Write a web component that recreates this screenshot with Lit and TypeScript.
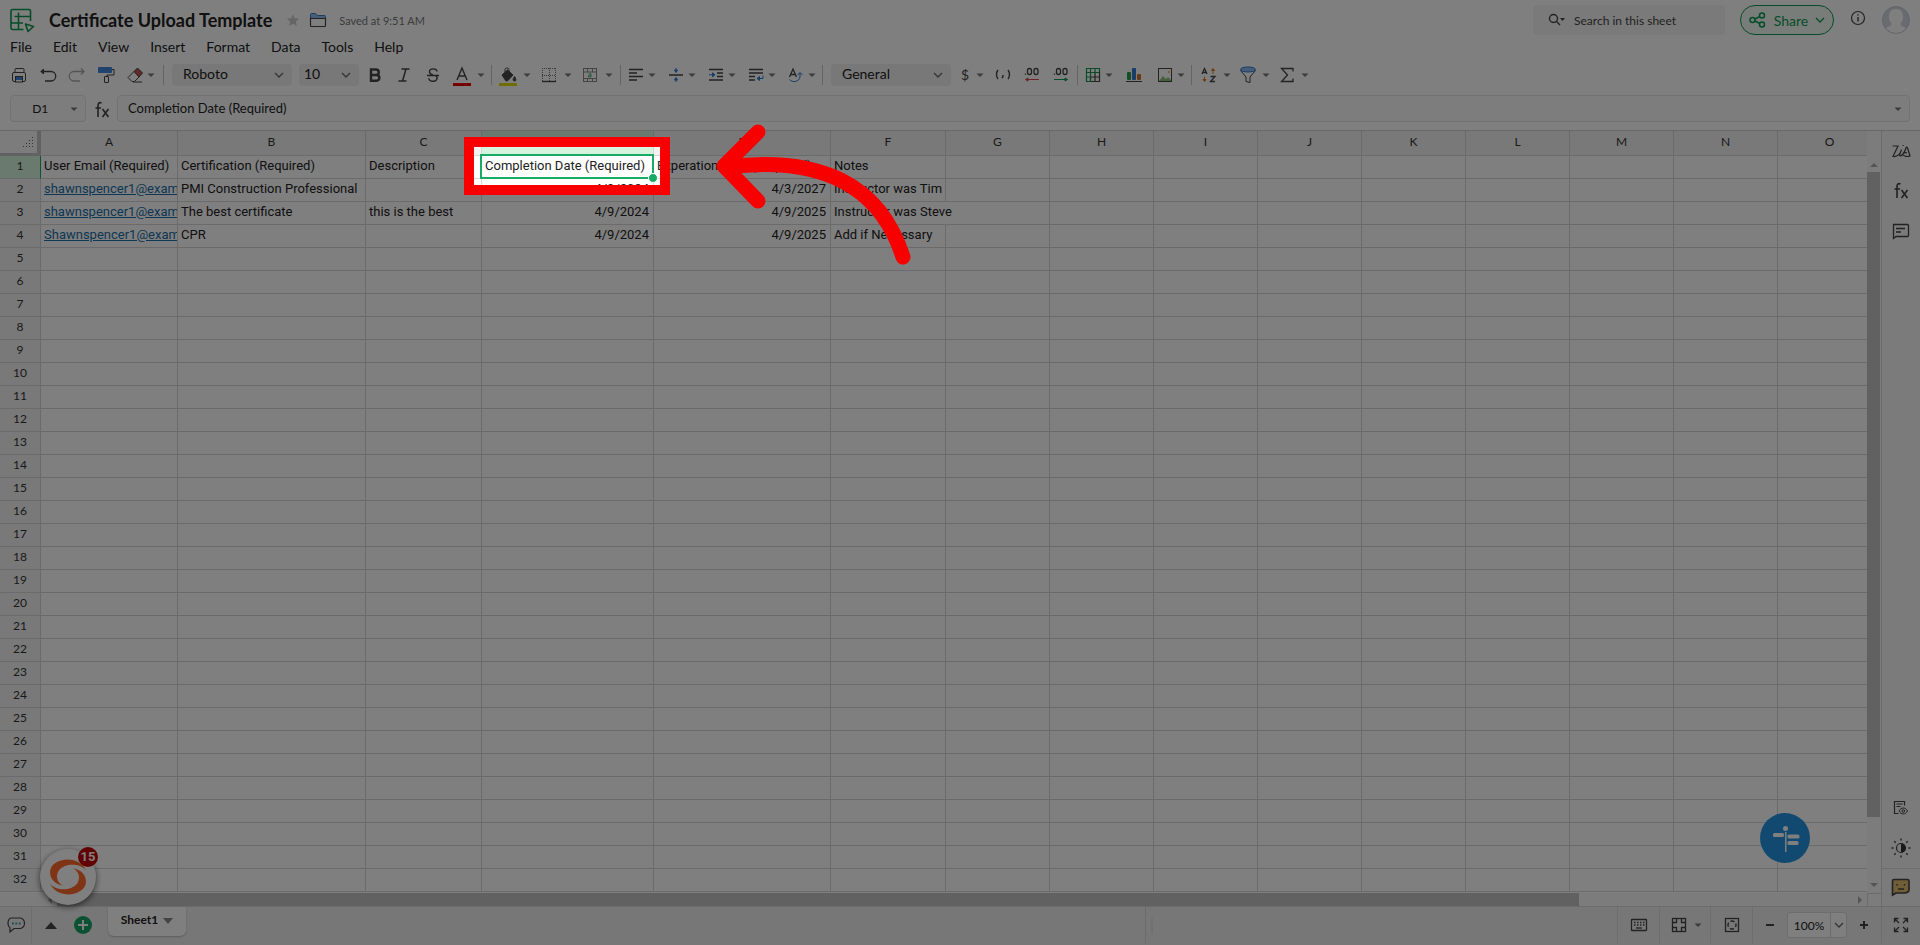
import { LitElement, html, svg, css, nothing, TemplateResult } from "lit";
import { customElement } from "lit/decorators.js";
import { classMap } from "lit/directives/class-map.js";

type Glyph = ReturnType<typeof svg>;

const G = "#444";

const icons: Record<string, Glyph> = {
  print: svg`<rect x="7" y="4.5" width="9" height="4" rx="1"/><rect x="4.500" y="8.500" width="13" height="9" rx="1.500"/><rect x="7.500" y="12.500" width="7" height="5.500" fill="#fff"/><rect x="8" y="13" width="6" height="3" fill="#3f86d8" stroke="none"/>`,
  undo: svg`<path stroke-width="1.300" d="M4 7.500h10a4.500 4.500 0 0 1 0 9.500H8"/><path d="M6.500 5 4 7.500 6.500 10z" fill="${G}"/>`,
  redo: svg`<g stroke="#aaa" stroke-width="1.300"><path d="M18 7.500H8a4.500 4.500 0 0 0 0 9.500h6"/><path d="M15 4.500l3 3-3 3"/></g>`,
  paint: svg`<rect x="3" y="3" width="14" height="6" rx="1" fill="#3f86d8" stroke="none"/><path d="M17 5.500h2v5.500h-7v2"/><rect x="9.500" y="12.500" width="4" height="6" rx=".5"/>`,
  eraser: svg`<path d="M10 7.500 13.500 4l5 5-3.500 4z" fill="#c9534f"/><path d="M10 7.500 4 13.500l4 4h2.500L15 13M9 18h9"/>`,
  bold: svg`<path stroke-width="2.400" d="M7 5.500h5a2.700 2.700 0 0 1 0 5.500H7zM7 11h5.500a2.800 2.800 0 0 1 0 5.700H7z"/>`,
  italic: svg`<path stroke-width="1.500" d="M8.500 5h8M5.500 17h8M13 5 9.500 17"/>`,
  strike: svg`<path stroke-width="1.400" d="M15 7.500C14.500 4 7.500 4 7.500 7.800c0 1.500 1 2.500 3.500 3.200M5 11.500h12M13.500 11.500c3 2 1.500 6-2.500 5.800-2.500 0-4-1-4.200-3"/>`,
  textColor: svg`<path stroke-width="1.400" d="M6 16 11 4l5 12M7.800 12h6.400"/><rect x="2" y="19" width="18" height="3" fill="#e80000" stroke="none"/>`,
  fill: svg`<path d="M5 11l5.500-5 5.500 5-5 5.500-2 .5z" fill="${G}"/><path d="M8 8V5.500C8 3.500 12 3.500 12 5.500V9"/><path d="M17.500 12.500c2 3 1.500 4.500 0 4.500s-2-1.500 0-4.500z" fill="${G}"/><rect x="2" y="19" width="18" height="3" fill="#e2dc00" stroke="none"/>`,
  borders: svg`<g stroke-dasharray="1 1"><path d="M4 4.500h14M4.500 4v14M17.500 4v14M4 11.500h14M11.500 4v14" stroke="#777"/></g><path stroke-width="1.400" d="M4 17.500h14"/>`,
  merge: svg`<g stroke="#888"><rect x="4.500" y="4.500" width="13" height="13"/><path d="M4.500 8h13M4.500 14.500h13M8.500 4.500V8M13.500 4.500V8M8.500 14.500v3M13.500 14.500v3"/></g><path stroke="#57b384" d="M9.500 9.800h2.500v3.200H9.500v-1.700H12"/>`,
  align: svg`<path stroke-width="1.500" d="M4 5.500h14M4 9h8M4 12.500h14M4 16h8"/>`,
  valign: svg`<path stroke-width="1.500" d="M4 11h14"/><path stroke="#2f7ad0" fill="#2f7ad0" d="M11 4v2M9.500 6h3L11 8.500zM11 18v-2M9.500 16h3L11 13.500z"/>`,
  indent: svg`<path stroke-width="1.500" d="M4 5.500h14M12 9h6M12 12.500h6M4 16h14"/><path stroke="#2f7ad0" fill="#2f7ad0" d="M4 10.800h4M7.500 8.800 10 10.800 7.500 12.800z"/>`,
  wrap: svg`<path stroke-width="1.500" d="M4 5.500h14M4 9h14M4 12.500h6M4 16h6"/><path stroke="#2f7ad0" d="M18 11.500v3h-5"/><path fill="#2f7ad0" stroke="#2f7ad0" d="M14.500 12.500v4l-2.500-2z"/>`,
  rotate: svg`<path stroke-width="1.300" d="M4.500 13 8 5l3.500 8M5.800 10.500h4.500"/><path stroke="#2f7ad0" d="M4.500 15.500c3 3.500 9.500 2.500 10.500-2.500V9M12.500 11 15 8.500l2.500 2.500"/>`,
  comma: svg`<path stroke-width="1.400" d="M6 6c-2 2.500-2 6.500 0 9M16 6c2 2.500 2 6.500 0 9M11 11v1.500l-1 1.700"/>`,
  decDown: svg`<path stroke-width="1.300" d="M4.500 9.500v1.200"/><rect x="6.500" y="4.500" width="4" height="6" rx="2" stroke-width="1.300"/><rect x="13" y="4.500" width="4" height="6" rx="2" stroke-width="1.300"/><path stroke="#d24a50" fill="#d24a50" d="M18 15.500H6M7 14v3l-2.500-1.500z"/>`,
  decUp: svg`<path stroke-width="1.300" d="M4.500 9.500v1.200"/><rect x="6.500" y="4.500" width="4" height="6" rx="2" stroke-width="1.300"/><rect x="13" y="4.500" width="4" height="6" rx="2" stroke-width="1.300"/><path stroke="#0d9950" fill="#0d9950" d="M4 15.500h12M15 14v3l2.500-1.500z"/>`,
  table: svg`<g stroke-width="1.200"><path d="M13.500 8.500h4v9h-9v-4M8.500 13h9M13 8.500v9"/><path stroke="#0d9950" d="M4.500 4.500h13v4h-13zM4.500 4.500v13h4v-13M13 4.500v4M4.500 13h4"/></g>`,
  chart: svg`<g stroke="none"><rect x="4" y="8" width="4" height="8" rx="1" fill="#2a9a4c"/><rect x="9" y="4" width="4" height="12" rx="1" fill="#2f7ad0"/><rect x="14" y="10" width="4" height="6" rx="1" fill="#d9721c"/></g><path d="M3 17.500h16"/>`,
  image: svg`<path stroke="none" fill="#8cc07a" d="M5 17l4-5 3 3 2-2 4 4z"/><rect x="4.500" y="4.500" width="13" height="13"/><path stroke="#e8a21c" stroke-width="1.500" d="M14 8h1.500"/>`,
  sort: svg`<path stroke-width="1.300" d="M4 10 6.500 4.500 9 10M5 8.500h3M12.500 12.500h4.500L12.500 17.500H17"/><path stroke="#e07c14" fill="#e07c14" d="M15 10V6M13.500 6.500h3L15 4.500zM6.500 12.500v4M5 15.500h3l-1.500 2z"/>`,
  filter: svg`<path d="M3.500 6.500 9 13v4.500l4 1V13l5.500-6.500"/><ellipse cx="11" cy="5.500" rx="7.500" ry="2.500" fill="#8dbcf0" stroke="#2f7ad0"/>`,
  sigma: svg`<path stroke-width="1.300" d="M17 7.500v-3H5.500l6 6.500-6 6.500H17v-3"/>`,
  info: svg`<circle cx="11" cy="11" r="6.500" stroke-width="1.200"/><path stroke-width="1.400" d="M11 10v4.500M11 7.300v1.200"/>`,
  zia: svg`<path stroke-width="1.200" d="M2.500 6H8L3 16.500c3 .5 5.500-1 7.500-4M11.500 9.500 9.500 15c1 3 5-2 6.500-7 .5-1.500 1.200-1 1.500 0l2.500 8c-2.500 1-6 .5-7.500-1.500 1-1.500 3-2 4.500-1.500M12.500 5.500h1.200"/>`,
  fx: svg`<path stroke-width="1.600" d="M10.500 4C8 3 7 4.500 7 6.500V18M4.500 9H10M11.500 10l6 8M17.500 10l-6 8"/>`,
  comment: svg`<path stroke-width="1.300" d="M3.500 4.500h14a1 1 0 0 1 1 1v10a1 1 0 0 1-1 1H6L3.500 18.500zM6 8.500h9M6 12h5"/>`,
  docEye: svg`<path stroke-width="1.200" d="M14.500 8.500v-4h-10v12h4M6.500 7h6M6.500 9.500h4"/><path d="M9 14c2-4 6.500-4 8.500 0-2 4-6.500 4-8.500 0z"/><circle cx="13.300" cy="14" r="1.300"/>`,
  contrast: svg`<circle cx="11" cy="11" r="4.500" stroke-width="1.200"/><path fill="#333" stroke="none" d="M11 6.500a4.500 4.500 0 0 1 0 9z"/><path stroke-width="1.400" d="M11 1.500v2M11 18.500v2M1.500 11h2M18.500 11h2M4.300 4.300l1.400 1.400M16.300 16.300l1.400 1.400M4.300 17.700l1.400-1.400M16.300 5.700l1.400-1.400"/>`,
  smiley: svg`<path stroke-width="1.600" fill="#e0bd72" d="M4 3.500h13.500q1.500 0 1.500 1.500v8.500q0 3.500-5 3.500H6l-3.500 2V5q0-1.500 1.500-1.500z"/><path stroke-width="1.500" d="M7 8v1.500M14.500 8v1.500M8 13h6"/>`,
  chat: svg`<path stroke-width="1.200" d="M6 4h9.500q4 1.200 4 5.300t-4 5.200H9L5 18v-4.200Q3 12.500 3 9.200 3 5 6 4z"/><path stroke="#3a9c9c" stroke-width="1.800" d="M7 9.500h1.800M10.400 9.500h1.800M13.800 9.500h1.800"/>`,
  keyboard: svg`<rect x="3.500" y="5.500" width="15" height="11" rx=".5" stroke-width="1.300"/><path stroke-dasharray="1.500 1.500" stroke-width="1.500" d="M6 8.500h11M6 11h11"/><path stroke-width="1.300" d="M8 14h6"/>`,
  panes: svg`<rect x="4.500" y="4.500" width="13" height="13" stroke-width="1.300"/><path stroke-width="1.300" d="M8.500 4.500v4h-4M13.500 4.500v4h4M8.500 17.500v-4h-4M13.500 17.500v-4h4"/>`,
  fit: svg`<rect x="4.500" y="4.500" width="13" height="13" stroke-width="1.300"/><circle cx="11" cy="11" r="4" stroke-width="1.400" stroke-dasharray="4.200 2.080" stroke-dashoffset="2.100"/>`,
  minus: svg`<path stroke-width="2" d="M7 11h8"/>`,
  plus: svg`<path stroke-width="2" d="M7 11h8M11 7v8"/>`,
  full: svg`<path stroke-width="1.300" d="M4.500 8.500v-4h4M4.500 4.500l4.500 4.500M17.500 8.500v-4h-4M17.500 4.500 13 9M4.500 13.500v4h4M4.500 17.500 9 13M17.500 13.500v4h-4M17.500 17.500 13 13"/>`,
  star: svg`<path fill="#ccc" stroke="none" d="M11 5l1.800 4.200 4.500.4-3.400 3 1 4.400-3.900-2.300L7.100 17l1-4.400-3.400-3 4.500-.4z"/>`,
  folder: svg`<path fill="#8dbcf0" stroke="#3d78bd" d="M3.500 10V5.500q0-1 1-1h4l2 2h7q1 0 1 1V10z"/><path fill="#fff" stroke-width="1.200" d="M3.500 9.500h15v7q0 1-1 1h-13q-1 0-1-1z"/>`,
  share: svg`<g stroke="#0d9950" stroke-width="1.500"><circle cx="5.500" cy="11" r="2.500"/><circle cx="15" cy="6.500" r="2.500"/><circle cx="15" cy="15.500" r="2.500"/><path d="M8 10l4.800-2.500M8 12l4.800 2.500"/></g>`,
};

const icon = (name: string): TemplateResult =>
  html`<svg class="icon" viewBox="0 0 22 22" fill="none" stroke="${G}" aria-hidden="true">${icons[name]}</svg>`;
const caret = html`<svg class="caret" viewBox="0 0 10 22" aria-hidden="true"><path d="M1.500 9.500h7L5 13z" fill="#777"/></svg>`;
const chevron = html`<svg class="chevron" viewBox="0 0 10 10" fill="none" stroke="#666" stroke-width="1.300" aria-hidden="true"><path d="M1 3l4 4 4-4"/></svg>`;

interface Tool {
  icon?: string;
  text?: string;
  label: string;
  menu?: boolean;
}
const t = (name: string, label: string, menu = false): Tool => ({ icon: name, label, menu });

const MENUS = ["File", "Edit", "View", "Insert", "Format", "Data", "Tools", "Help"];

const COLUMNS = [
  { name: "A", width: 137 },
  { name: "B", width: 188 },
  { name: "C", width: 116 },
  { name: "D", width: 172 },
  { name: "E", width: 177 },
  { name: "F", width: 115 },
  ..."GHIJKLMNO".split("").map((name) => ({ name, width: 104 })),
];
const ROW_COUNT = 32;
const CELLS: string[][] = [
  ["User Email (Required)", "Certification (Required)", "Description", "Completion Date (Required)", "Experation Date (Required)", "Notes"],
  ["shawnspencer1@example.com", "PMI Construction Professional", "", "4/9/2024", "4/3/2027", "Instructor was Tim"],
  ["shawnspencer1@example.com", "The best certificate", "this is the best", "4/9/2024", "4/9/2025", "Instructor was Steve"],
  ["Shawnspencer1@example.com", "CPR", "", "4/9/2024", "4/9/2025", "Add if Necessary"],
];

const reset = css`
  :host {
    box-sizing: border-box;
    display: block;
    font-family: Lato, "Liberation Sans", sans-serif;
    color: #222;
  }
  *,
  *::before,
  *::after {
    box-sizing: border-box;
  }
  button,
  input,
  select {
    margin: 0;
    padding: 0;
    border: 0;
    background: none;
    font: inherit;
    color: inherit;
    appearance: none;
    outline: none;
    min-width: 0;
  }
  button {
    display: flex;
    align-items: center;
    justify-content: center;
  }
  .icon {
    width: 22px;
    height: 22px;
    flex: none;
    display: block;
  }
  .caret {
    width: 10px;
    height: 22px;
    flex: none;
    display: block;
  }
  .chevron {
    width: 10px;
    height: 10px;
    flex: none;
    display: block;
  }
`;

@customElement("sheet-header")
class SheetHeader extends LitElement {
  static styles = [
    reset,
    css`
      .top {
        display: flex;
        justify-content: space-between;
        align-items: flex-start;
        padding: 5px 10px 0 8px;
        height: 35px;
      }
      .left,
      .right {
        display: flex;
        align-items: center;
        height: 30px;
      }
      .logo {
        width: 28px;
        height: 28px;
      }
      h1 {
        margin: 0 10px 0 13px;
        font-size: 18px;
        line-height: 24px;
        font-weight: 700;
        color: #222;
      }
      .fold {
        margin: 0 10px 0 3px;
      }
      .saved {
        font-size: 11px;
        color: #777;
      }
      .search {
        display: flex;
        align-items: center;
        width: 192px;
        height: 30px;
        padding-left: 14px;
        border-radius: 4px;
        background: #f5f5f5;
        font-size: 12px;
      }
      .search svg {
        width: 20px;
        height: 20px;
        margin-right: 7px;
      }
      .search input {
        flex: 1;
      }
      .search input::placeholder {
        color: #444;
        opacity: 1;
      }
      .share {
        width: 94px;
        height: 30px;
        margin: 0 13px 0 15px;
        padding-right: 2px;
        gap: 5px;
        border: 1px solid #0d9950;
        border-radius: 15px;
        background: #f0faf4;
        color: #0d9950;
        font-size: 14px;
      }
      .share .chevron {
        stroke: #0d9950;
        margin-left: 2px;
      }
      .info {
        margin-bottom: 4px;
      }
      .avatar {
        width: 28px;
        height: 28px;
        margin-left: 13px;
      }
      .menus {
        display: flex;
        gap: 21px;
        padding: 0 10px;
        height: 22px;
        align-items: center;
        font-size: 14px;
      }
    `,
  ];
  render() {
    return html`
      <div class="top">
        <div class="left">
          <svg class="logo" viewBox="0 0 28 28" fill="none" stroke="#0d9950" stroke-width="1.600" aria-hidden="true">
            <path d="M15.500 23.500H4.500q-1.500 0-1.500-1.500V5q0-1.500 1.500-1.500H21q1.500 0 1.500 1.500v10M6.500 10.500h16M10.500 6.500v17M3 17h12" />
            <path d="M17.500 18l8 2.500-5.500 5z" stroke-linejoin="round" />
          </svg>
          <h1>Certificate Upload Template</h1>
          <button aria-label="Favourite">${icon("star")}</button>
          <button class="fold" aria-label="Move to folder">${icon("folder")}</button>
          <span class="saved">Saved at 9:51 AM</span>
        </div>
        <div class="right">
          <label class="search">
            <svg viewBox="0 0 20 20" fill="none" stroke="#444" stroke-width="1.400" aria-hidden="true">
              <circle cx="6.500" cy="8.500" r="4" /><path d="M9.500 11.500l3.500 3.500" /><path d="M13 8h5l-2.500 3z" fill="#444" stroke="none" />
            </svg>
            <input placeholder="Search in this sheet" aria-label="Search in this sheet" />
          </label>
          <button class="share">${icon("share")}<span>Share</span>${chevron}</button>
          <button class="info" aria-label="Information">${icon("info")}</button>
          <svg class="avatar" viewBox="0 0 28 28" aria-hidden="true">
            <clipPath id="round"><circle cx="14" cy="14" r="13.500" /></clipPath>
            <circle cx="14" cy="14" r="13.500" fill="#d3d7e0" />
            <g clip-path="url(#round)" fill="#fff">
              <path d="M14 3c5 0 7 3.500 7 7.500 0 4-1.500 5.500-2.500 7 0 3 3 3 6 5v6h-21v-6c3-2 6-2 6-5-1-1.500-2.500-3-2.500-7C7 6.500 9 3 14 3z" />
            </g>
            <circle cx="14" cy="14" r="13.500" fill="none" stroke="#c5c9d0" />
          </svg>
        </div>
      </div>
      <nav class="menus">${MENUS.map((m) => html`<button>${m}</button>`)}</nav>
    `;
  }
}

@customElement("sheet-toolbar")
class SheetToolbar extends LitElement {
  static styles = [
    reset,
    css`
      .bar {
        display: flex;
        align-items: center;
        height: 35px;
        padding-left: 8px;
      }
      .group {
        display: flex;
        gap: 7px;
        padding-right: 7px;
      }
      .group.wide {
        gap: 6px;
        padding: 0 6px 0 5px;
      }
      .group.text {
        gap: 7px;
        padding: 0 5px;
      }
      .group.wide button,
      .group.text button,
      .group.last button {
        gap: 3px;
      }
      .group.middle {
        gap: 8px;
        padding: 0 5px 0 4px;
      }
      .group.number {
        padding: 0 5px 0 4px;
      }
      .group.insert {
        padding: 0 5px 0 4px;
        gap: 9px;
      }
      .group.last {
        padding-left: 6px;
        gap: 5px;
      }
      .group.last button {
        gap: 2px;
      }
      .sep {
        width: 1px;
        height: 20px;
        background: #c8c8c8;
      }
      .selects {
        display: flex;
        gap: 7px;
        padding-left: 8px;
      }
      .select {
        display: grid;
        align-items: center;
        height: 22px;
        border-radius: 4px;
        background: #f0f0f0;
        font-size: 14px;
      }
      .select > * {
        grid-area: 1 / 1;
      }
      .select select {
        width: 100%;
        height: 22px;
        padding: 0 0 2px 11px;
      }
      .select .chevron {
        justify-self: end;
        margin-right: 8px;
        pointer-events: none;
      }
      .large {
        width: 120px;
      }
      .small {
        width: 60px;
      }
      .small select {
        padding-left: 5px;
      }
      .sign {
        width: 20px;
        font-size: 14px;
        color: #444;
      }
    `,
  ];
  tools(cls: string, list: Tool[]) {
    return html`<div class="group ${cls}">
      ${list.map(
        (x) => html`<button aria-label=${x.label}>
          ${x.icon ? icon(x.icon) : html`<span class="sign">${x.text}</span>`}${x.menu ? caret : nothing}
        </button>`
      )}
    </div>`;
  }
  select(cls: string, label: string, value: string) {
    return html`<label class="select ${cls}"
      ><select aria-label=${label}><option>${value}</option></select>${chevron}</label
    >`;
  }
  render() {
    const sep = html`<span class="sep"></span>`;
    return html`<div class="bar" role="toolbar">
      ${this.tools("", [t("print", "Print"), t("undo", "Undo"), t("redo", "Redo"), t("paint", "Format painter"), t("eraser", "Clear", true)])}
      ${sep}
      <div class="selects">${this.select("large", "Font", "Roboto")}${this.select("small", "Font size", "10")}</div>
      ${this.tools("text", [t("bold", "Bold"), t("italic", "Italic"), t("strike", "Strikethrough"), t("textColor", "Text color", true)])}
      ${sep}
      ${this.tools("wide", [t("fill", "Fill color", true), t("borders", "Borders", true), t("merge", "Merge cells", true)])}
      ${sep}
      ${this.tools("middle", [
        t("align", "Horizontal align", true),
        t("valign", "Vertical align", true),
        t("indent", "Indent", true),
        t("wrap", "Text wrap", true),
        t("rotate", "Text rotation", true),
      ])}
      ${sep}
      <div class="selects">${this.select("large", "Number format", "General")}</div>
      ${this.tools("number", [
        { text: "$", label: "Currency", menu: true },
        t("comma", "Thousands separator"),
        t("decDown", "Decrease decimals"),
        t("decUp", "Increase decimals"),
      ])}
      ${sep}
      ${this.tools("insert", [t("table", "Table", true), t("chart", "Chart"), t("image", "Image", true)])}
      ${sep}
      ${this.tools("last", [t("sort", "Sort", true), t("filter", "Filter", true), t("sigma", "Sum", true)])}
    </div>`;
  }
}

@customElement("formula-bar")
class FormulaBar extends LitElement {
  static styles = [
    reset,
    css`
      .bar {
        display: flex;
        align-items: center;
        padding: 3px 10px 8px;
        border-bottom: 1px solid #d0d0d0;
      }
      .box {
        display: flex;
        align-items: center;
        height: 27px;
        border: 1px solid #e4e4e4;
        border-radius: 4px;
        background: #fbfbfb;
      }
      .name {
        width: 76px;
        padding-right: 6px;
        font-size: 12px;
      }
      .name input {
        width: 62px;
        text-align: center;
      }
      .icon {
        margin: 2px 4px 0 5px;
      }
      .formula {
        flex: 1;
        padding: 0 6px 0 10px;
        font-size: 13px;
      }
      .formula input {
        flex: 1;
        padding-bottom: 1px;
      }
    `,
  ];
  render() {
    return html`<div class="bar">
      <div class="box name"><input aria-label="Cell" value="D1" /><button aria-label="Named ranges">${caret}</button></div>
      ${icon("fx")}
      <div class="box formula">
        <input aria-label="Formula" value="Completion Date (Required)" /><button aria-label="Expand">${caret}</button>
      </div>
    </div>`;
  }
}

@customElement("sheet-grid")
class SheetGrid extends LitElement {
  static styles = [
    reset,
    css`
      :host {
        flex: 1;
        min-width: 0;
        min-height: 0;
        display: grid;
        grid-template: minmax(0, 1fr) 13px / minmax(0, 1fr) 14px;
      }
      .view {
        overflow: hidden;
      }
      table {
        table-layout: fixed;
        width: 0;
        border-spacing: 0;
        font: 13px/16px Roboto, "Liberation Sans", sans-serif;
      }
      .rows {
        width: 41px;
      }
      th,
      td {
        padding: 0;
        height: 23px;
        border: solid #d6d6d6;
        border-width: 0 1px 1px 0;
        white-space: nowrap;
      }
      th {
        padding-bottom: 2px;
        background: #f2f2f2;
        font: 12px/16px Lato, sans-serif;
        color: #333;
      }
      thead th {
        height: 25px;
      }
      .corner {
        background: #f8f8f8;
        border-right: 4px solid #c4c4c4;
        border-bottom: 3px solid #c4c4c4;
      }
      .corner svg {
        display: block;
        width: 12px;
        height: 12px;
        margin: 4px 0 0 23px;
      }
      td {
        padding: 0 3px 2px;
        color: #222;
        overflow: hidden;
      }
      .date {
        padding-right: 4px;
        text-align: right;
      }
      .spill {
        overflow: visible;
        border-right-color: transparent;
      }
      .active-head {
        background: #d4f4de;
      }
      tbody .active-head {
        border-right-color: #17ab66;
      }
      .active {
        position: relative;
        overflow: visible;
      }
      .active::before {
        content: "";
        position: absolute;
        inset: -2px -1px -1px -2px;
        border: 2px solid #17ab66;
      }
      .active::after {
        content: "";
        position: absolute;
        right: -5px;
        bottom: -5px;
        width: 10px;
        height: 10px;
        border: 1px solid #fff;
        border-radius: 5px;
        background: #17ab66;
      }
      a {
        display: block;
        margin-right: -3px;
        overflow: hidden;
        color: #1a6ea8;
      }
      .vbar,
      .hbar {
        display: flex;
        align-items: center;
        background: #f8f8f8;
      }
      .vbar {
        flex-direction: column;
        padding: 25px 1px 1px 0;
      }
      .hbar {
        padding-left: 43px;
      }
      .vthumb,
      .hthumb {
        background: #c2c2c2;
      }
      .vthumb {
        flex: 645;
        width: 13px;
      }
      .vrest {
        flex: 59;
      }
      .hthumb {
        flex: 1522;
        height: 13px;
      }
      .hrest {
        flex: 274;
      }
      .arrow {
        width: 14px;
        height: 16px;
        flex: none;
      }
      .end {
        border: solid #d6d6d6;
        border-width: 1px 0 0 1px;
        background: #f8f8f8;
      }
    `,
  ];
  cell(row: number, col: number) {
    const text = CELLS[row]?.[col] ?? "";
    const cls = {
      date: row > 0 && (col === 3 || col === 4),
      spill: row === 2 && col === 5,
      active: row === 0 && col === 3,
    };
    return html`<td class=${classMap(cls)}>${col === 0 && row > 0 && text ? html`<a href="mailto:${text}">${text}</a>` : text}</td>`;
  }
  arrow(d: string) {
    return html`<svg class="arrow" viewBox="0 0 14 16" fill="#aaa" aria-hidden="true"><path d=${d} /></svg>`;
  }
  render() {
    const rows = Array.from({ length: ROW_COUNT }, (_, i) => i);
    const dots = [0, 1, 2, 3].flatMap((r) => [0, 1, 2, 3].filter((c) => c >= 3 - r).map((c) => svg`<rect x=${c * 3} y=${r * 3} width="1" height="1"/>`));
    return html`
      <div class="view">
        <table>
          <colgroup>
            <col class="rows" />
            ${COLUMNS.map((c) => html`<col style="width:${c.width}px" />`)}
          </colgroup>
          <thead>
            <tr>
              <th class="corner"><svg viewBox="0 0 12 12" fill="#666" aria-hidden="true">${dots}</svg></th>
              ${COLUMNS.map((c) => html`<th class=${classMap({ "active-head": c.name === "D" })}>${c.name}</th>`)}
            </tr>
          </thead>
          <tbody>
            ${rows.map(
              (r) => html`<tr>
                <th class=${classMap({ "active-head": r === 0 })}>${r + 1}</th>
                ${COLUMNS.map((_, c) => this.cell(r, c))}
              </tr>`
            )}
          </tbody>
        </table>
      </div>
      <div class="vbar">${this.arrow("M3 11h8L7 7z")}<span class="vthumb"></span><span class="vrest"></span>${this.arrow("M3 7h8l-4 4z")}</div>
      <div class="hbar">${this.arrow("M9 4v8L5 8z")}<span class="hthumb"></span><span class="hrest"></span>${this.arrow("M5 4v8l4-4z")}</div>
      <div class="end"></div>
    `;
  }
}

@customElement("side-rail")
class SideRail extends LitElement {
  static styles = [
    reset,
    css`
      :host {
        width: 39px;
        flex: none;
        border-left: 1px solid #d6d6d6;
        background: #f6f6f6;
      }
      .rail {
        display: flex;
        flex-direction: column;
        height: 100%;
      }
      button {
        height: 40px;
        width: 100%;
      }
      .last {
        margin-top: auto;
      }
      .line {
        height: 38px;
        padding-bottom: 2px;
        border-top: 1px solid #dcdcdc;
      }
    `,
  ];
  render() {
    const b = (name: string, label: string, cls = "") => html`<button class=${cls} aria-label=${label}>${icon(name)}</button>`;
    return html`<div class="rail">
      ${b("zia", "Zia")}${b("fx", "Functions")}${b("comment", "Comments")}${b("docEye", "Preview", "last")}${b("contrast", "Theme")}${b("smiley", "Feedback", "line")}
    </div>`;
  }
}

@customElement("status-bar")
class StatusBar extends LitElement {
  static styles = [
    reset,
    css`
      .bar {
        display: flex;
        height: 39px;
        padding-bottom: 2px;
        border-top: 1px solid #d6d6d6;
        background: #efefef;
      }
      .chat {
        width: 32px;
        border-right: 1px solid #dadada;
      }
      .up {
        width: 38px;
      }
      .up svg {
        width: 14px;
        height: 8px;
      }
      .add {
        width: 26px;
      }
      .add svg {
        width: 18px;
        height: 18px;
      }
      .tab {
        width: 78px;
        height: 29px;
        margin-left: 12px;
        padding-bottom: 4px;
        gap: 5px;
        border-radius: 0 0 6px 6px;
        background: #fff;
        box-shadow: 0 1px 2px #bbb;
        font-size: 12px;
        font-weight: 700;
      }
      .tab svg {
        width: 10px;
        height: 6px;
        margin-top: 3px;
      }
      .space {
        flex: 0 1 960px;
        border-right: 1px solid #d6d6d6;
      }
      .grip {
        width: 2px;
        height: 16px;
        margin: 11px auto 0 5px;
        background: #e0e0e0;
      }
      .tool {
        border-left: 1px solid #dadada;
        width: 42px;
      }
      .panes {
        width: 51px;
        gap: 3px;
      }
      .zoom {
        display: flex;
        align-items: center;
        justify-content: space-between;
        width: 129px;
        padding: 0 6px;
        border-left: 1px solid #dadada;
      }
      .combo {
        display: flex;
        align-items: center;
        width: 60px;
        height: 26px;
        border: 1px solid #dadada;
        border-radius: 3px;
        background: #fff;
        font-size: 12px;
      }
      .combo input {
        width: 42px;
        text-align: center;
      }
      .combo button {
        width: 16px;
        height: 24px;
        border-left: 1px solid #dadada;
      }
      .full {
        width: 39px;
      }
    `,
  ];
  render() {
    return html`<div class="bar">
      <button class="chat" aria-label="Chat">${icon("chat")}</button>
      <button class="up" aria-label="Sheets list"><svg viewBox="0 0 14 8"><path d="M1 8h12L7 1z" fill="#444" /></svg></button>
      <button class="add" aria-label="Add sheet">
        <svg viewBox="0 0 18 18"><circle cx="9" cy="9" r="9" fill="#17a566" /><path d="M9 4v10M4 9h10" stroke="#fff" stroke-width="2" /></svg>
      </button>
      <button class="tab">Sheet1<svg viewBox="0 0 10 6" aria-hidden="true"><path d="M0 0h10L5 6z" fill="#888" /></svg></button>
      <span class="space"></span>
      <span class="grip"></span>
      <button class="tool" aria-label="Keyboard">${icon("keyboard")}</button>
      <button class="tool panes" aria-label="Freeze panes">${icon("panes")}${caret}</button>
      <button class="tool" aria-label="Fit">${icon("fit")}</button>
      <div class="zoom">
        <button aria-label="Zoom out">${icon("minus")}</button>
        <div class="combo"><input aria-label="Zoom" value="100%" /><button aria-label="Zoom levels">${chevron}</button></div>
        <button aria-label="Zoom in">${icon("plus")}</button>
      </div>
      <button class="tool full" aria-label="Full screen">${icon("full")}</button>
    </div>`;
  }
}

@customElement("app-root")
class AppRoot extends LitElement {
  static styles = [
    reset,
    css`
      :host {
        position: relative;
        display: flex;
        flex-direction: column;
        height: 100vh;
        overflow: hidden;
        background: #fff;
      }
      .main {
        flex: 1;
        min-height: 0;
        display: flex;
      }
      .widget {
        position: absolute;
        left: 40px;
        bottom: 40px;
        width: 56px;
        height: 56px;
        border-radius: 50%;
        background: #fff;
        box-shadow: 0 2px 6px rgba(0, 0, 0, 0.6);
      }
      .widget svg {
        width: 38px;
        height: 38px;
      }
      .count {
        position: absolute;
        right: -2px;
        top: -2px;
        width: 20px;
        height: 20px;
        border-radius: 10px;
        background: #c40000;
        color: #fff;
        font: 700 13px/20px Roboto, sans-serif;
        text-align: center;
      }
      .guide {
        position: absolute;
        right: 110px;
        bottom: 82px;
        width: 50px;
        height: 50px;
        border-radius: 50%;
        background: #2492e0;
      }
      .guide svg {
        width: 50px;
        height: 50px;
      }
      .spotlight {
        position: absolute;
        left: 464px;
        top: 137px;
        width: 206px;
        height: 58px;
        border: 10px solid #f80000;
        box-shadow: 0 0 0 4000px rgba(0, 0, 0, 0.5);
        pointer-events: none;
      }
      .pointer {
        position: absolute;
        left: 710px;
        top: 120px;
        width: 210px;
        height: 150px;
        pointer-events: none;
      }
    `,
  ];
  render() {
    const swirl = "M190 196C155 190 146 165 152 145 165 112 235 104 258 150 240 128 195 128 177 150 165 168 172 188 190 196z";
    return html`
      <sheet-header></sheet-header>
      <sheet-toolbar></sheet-toolbar>
      <formula-bar></formula-bar>
      <div class="main"><sheet-grid></sheet-grid><side-rail></side-rail></div>
      <status-bar></status-bar>
      <button class="widget" aria-label="Help widget">
        <svg viewBox="147 113 114 114" fill="#ff6a2a" aria-hidden="true">
          <path d=${swirl} />
          <path d=${swirl} transform="rotate(180 204 170)" />
        </svg>
        <span class="count">15</span>
      </button>
      <button class="guide" aria-label="Guide">
        <svg viewBox="0 0 50 50" fill="#fff" aria-hidden="true">
          <circle cx="25.500" cy="15.500" r="2.500" /><rect x="25" y="19" width="1.500" height="20" />
          <rect x="13" y="20" width="11" height="4" rx="1.500" /><rect x="27.500" y="21.500" width="12" height="4" rx="1.500" /><rect x="27.500" y="28" width="11" height="4" rx="1.500" />
        </svg>
      </button>
      <div class="spotlight"></div>
      <svg class="pointer" viewBox="710 120 210 150" fill="none" stroke="#f80000" stroke-width="15" stroke-linecap="round" stroke-linejoin="round" aria-hidden="true">
        <path d="M758 132 724 166l34 35M726 167C820 155 880 184 903 257" />
      </svg>
    `;
  }
}
